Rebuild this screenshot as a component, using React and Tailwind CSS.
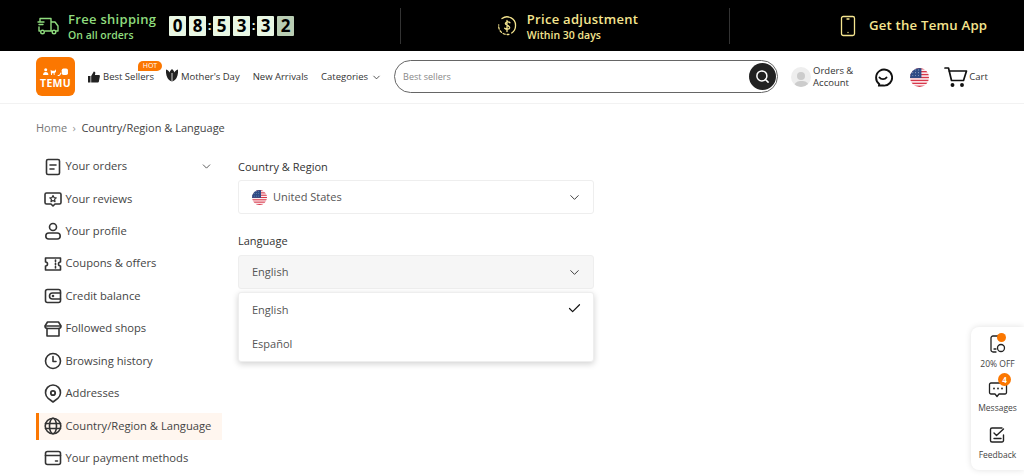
import React from "react";
import { ChevronDown, Check, Search } from "lucide-react";

const font = "font-['Open_Sans','Noto_Sans',sans-serif]";

function Flag({ size = 20 }) {
  const stripes = [];
  for (let i = 0; i < 7; i++) stripes.push(<rect key={i} x="0" y={i * 3.08} width="20" height="1.54" fill="#d8374a" />);
  return (
    <svg width={size} height={size} viewBox="0 0 20 20" className="shrink-0">
      <defs><clipPath id="fc"><circle cx="10" cy="10" r="10" /></clipPath></defs>
      <g clipPath="url(#fc)">
        <rect width="20" height="20" fill="#fff" />
        {stripes}
        <rect width="12" height="10.500" fill="#2f4b85" />
        {[2, 5, 8].map((y) => [3, 6, 9].map((x) => <circle key={x + "-" + y} cx={x} cy={y} r="0.45" fill="#fff" />))}
      </g>
    </svg>
  );
}

const S = ({ children, size = 20, sw = 1.6, cls = "" }) => (
  <svg width={size} height={size} viewBox="0 0 20 20" fill="none" stroke="currentColor" strokeWidth={sw} strokeLinecap="round" strokeLinejoin="round" className={"shrink-0 " + cls}>
    {children}
  </svg>
);

const menu = [
  ["Your orders", <S key="a"><rect x="3.500" y="2.500" width="13" height="15" rx="1.500" /><path d="M7 8h6M7 12h4" /></S>],
  ["Your reviews", <S key="b"><path d="M3.500 4h13a1.500 1.500 0 0 1 1.500 1.500v8a1.500 1.500 0 0 1-1.500 1.500H12l-2 2-2-2H3.500A1.500 1.500 0 0 1 2 13.500v-8A1.500 1.500 0 0 1 3.500 4z" /><path d="M10 6.500l1 2.100 2.200.3-1.600 1.500.4 2.200-2-1.100-2 1.100.4-2.200-1.600-1.500 2.200-.3z" strokeWidth="1.200" /></S>],
  ["Your profile", <S key="c"><circle cx="10" cy="6" r="3.500" /><rect x="2.800" y="12" width="14.400" height="6" rx="3" /></S>],
  ["Coupons & offers", <S key="d"><path d="M2.500 4h15v4a2 2 0 0 0 0 4v4h-15v-4a2 2 0 0 0 0-4z" /><path d="M12.500 6v1.500M12.500 9.300v1.400M12.500 12.500V14" /></S>],
  ["Credit balance", <S key="e"><rect x="2.500" y="3.500" width="15" height="13" rx="2" /><path d="M17.500 7H9.500a3 3 0 0 0 0 6h8" /><circle cx="10" cy="10" r=".5" /></S>],
  ["Followed shops", <S key="f"><path d="M4.500 3h11l2.500 4a2.500 2.500 0 0 1-2.500 2.500h-11A2.500 2.500 0 0 1 2 7z" /><path d="M4 9.500V17h12V9.500M2.500 7h15" /></S>],
  ["Browsing history", <S key="g"><circle cx="10" cy="10" r="7.500" /><path d="M10 5.500V10.500h3" /></S>],
  ["Addresses", <S key="h"><path d="M10 18l-4.800-3.700A7.500 7.500 0 1 1 14.800 14.300z" /><circle cx="10" cy="9" r="2.200" strokeWidth="1.800" /></S>],
  ["Country/Region & Language", <S key="i"><circle cx="10" cy="10" r="7.800" /><ellipse cx="10" cy="10" rx="3.500" ry="7.800" /><path d="M2.500 7.500h15M2.500 12.500h15" /></S>],
  ["Your payment methods", <S key="j"><rect x="2.500" y="3.500" width="15" height="13" rx="2" /><path d="M2.500 7.500h15M12.500 13h2" /></S>],
];

function Digit({ d, dim }) {
  return (
    <span className={`flex h-[20px] w-[17px] items-center justify-center rounded-[1px] text-[17px] font-bold leading-none text-black ${dim ? "bg-[#b9cdb3]" : "bg-[#e9f7e4]"}`}>
      {d}
    </span>
  );
}
const Colon = () => <span className="w-[7px] text-center text-[13px] font-bold leading-none text-[#e9f7e4]">:</span>;

function Logo() {
  return (
    <div className="mt-[-1px] flex h-[39px] w-[39px] shrink-0 flex-col items-center justify-center rounded-[6px] bg-[#fb7701] pt-[3px] text-white">
      <svg width="29" height="8" viewBox="0 0 29 9" fill="#fff">
        <circle cx="3.500" cy="2" r="1.700" />
        <path d="M.500 8c0-2.500 1-3.500 3-3.500s3 1 3 3.500z" />
        <path d="M9 2l1.500 1h3L15 1.500v3l-1.500 1V8h-1V6h-2v2h-1z" />
        <path d="M17 8c2 0 2.500-1 3-3l1 .5C20.500 8 19 9 17 9z" />
        <rect x="21.500" y=".5" width="7" height="7.500" rx="2" />
      </svg>
      <span className={`mt-[2px] text-[10.500px] font-bold leading-none tracking-[0.3px] ${font}`}>TEMU</span>
    </div>
  );
}

export default function App() {
  return (
    <div className={`relative h-[476px] w-[1024px] overflow-hidden bg-white text-[#222] ${font}`}>
      {/* promo bar */}
      <div className="flex h-[51px] items-center bg-black">
        <div className="flex w-[400px] items-center pl-[37px]">
          <svg width="22" height="20" viewBox="0 0 22 20" fill="none" stroke="#8fdc7e" strokeWidth="1.400" strokeLinecap="round" strokeLinejoin="round" className="shrink-0">
            <path d="M3 5V2.500h11V15H8M3 15H2V11M14 6h4l3 4v5h-2M14 15h1M1 6h6M2 8.500h4" />
            <circle cx="5.500" cy="16" r="1.800" />
            <circle cx="17" cy="16" r="1.800" />
          </svg>
          <div className="ml-[9px] flex w-[101px] flex-col">
            <span className="text-[13px] font-semibold leading-[18px] tracking-[0.3px] text-[#8fdc7e] whitespace-nowrap">Free shipping</span>
            <span className="text-[10.500px] font-semibold leading-[14px] text-[#8fdc7e] whitespace-nowrap">On all orders</span>
          </div>
          <div className="flex items-center">
            <div className="flex gap-[3px]"><Digit d="0" /><Digit d="8" /></div>
            <Colon />
            <div className="flex gap-[3px]"><Digit d="5" /><Digit d="3" /></div>
            <Colon />
            <div className="flex gap-[3px]"><Digit d="3" /><Digit d="2" dim /></div>
          </div>
        </div>
        <div className="flex h-[36px] w-[330px] items-center justify-center gap-[9px] border-x border-[#333] pl-[4px]">
          <svg width="22" height="22" viewBox="0 0 22 22" fill="none" stroke="#f5e58f" strokeWidth="1.300" strokeLinecap="round" className="shrink-0">
            <path d="M6 3.500A8.500 8.500 0 0 1 19.500 11c0 3-1.500 5.500-3.800 7" />
            <path d="M13 19.300a8.500 8.500 0 0 1-10.300-9.300" strokeDasharray="2 2" />
            <path d="M14 7.800c-.7-1-3.900-1.400-4.600.4-.7 2.300 4.600 2 4.300 4.700-.5 1.700-3.700 1.700-5 .3M11 5.500v11" />
          </svg>
          <div className="flex flex-col">
            <span className="text-[13px] font-semibold leading-[18px] tracking-[0.28px] text-[#f5e58f]">Price adjustment</span>
            <span className="text-[10.500px] font-semibold leading-[14px] text-[#f5e58f]">Within 30 days</span>
          </div>
        </div>
        <div className="flex items-center pl-[110px]">
          <svg width="16" height="22" viewBox="0 0 16 22" fill="none" stroke="#f5e58f" strokeWidth="1.300" strokeLinecap="round" className="shrink-0">
            <rect x="1.500" y="1.500" width="13" height="19" rx="1.800" />
            <path d="M7 4h2M8 17.500h.01" />
          </svg>
          <span className="ml-[13px] whitespace-nowrap text-[13.200px] font-semibold tracking-[0.2px] text-[#f5e58f]">Get the Temu App</span>
        </div>
      </div>

      {/* main nav */}
      <div className="flex h-[53px] items-center border-b border-[#f2f2f2] pl-[36px]">
        <Logo />
        <div className="ml-[13px] flex items-center text-[9.500px] text-[#333]">
          <div className="relative flex items-center gap-[3px]">
            <svg width="12" height="12" viewBox="0 0 12 12" fill="#222"><path d="M0 5h2.500v6.500H0zM3.200 5L5.800.5c1 0 1.700.7 1.500 1.800L6.900 4h4c.7 0 1.100.6 1 1.300l-1 5.300c-.1.6-.5.900-1.100.9H3.200z" /></svg>
            <span className="whitespace-nowrap">Best Sellers</span>
            <span className="absolute left-[50px] top-[-9px] flex h-[10px] w-[24px] items-center justify-center rounded-[5px] rounded-bl-none bg-[#fb7701] text-[7px] leading-none text-white">HOT</span>
          </div>
          <div className="ml-[12px] flex items-center gap-[3px]">
            <svg width="12" height="13" viewBox="0 0 12 13" fill="#222" className="mt-[-3px]"><path d="M0 .5C2 1 3 2 3.500 3.500 4 2 5 .8 6 0c1 .8 2 2 2.500 3.500C9 2 10 1 12 .5c.3 3-.2 6-1.500 8.500-1 1.800-2.800 3-4.500 3.500C4.300 12 2.500 10.800 1.500 9 .2 6.500-.3 3.500 0 .5z" /><path d="M6 4v8.500" stroke="#fff" strokeWidth=".8" /></svg>
            <span className="whitespace-nowrap">Mother's Day</span>
          </div>
          <span className="ml-[13px] whitespace-nowrap">New Arrivals</span>
          <span className="ml-[13px] whitespace-nowrap">Categories</span>
          <ChevronDown size={11} strokeWidth={1.800} className="ml-[3px]" />
        </div>
        <div className="ml-[12px] mt-[-1px] flex h-[33px] w-[384px] items-center justify-between rounded-full border border-[#666] pl-[8px] pr-[1px]">
          <span className="text-[9px] text-[#888]">Best sellers</span>
          <span className="flex h-[27px] w-[27px] items-center justify-center rounded-full bg-[#222]">
            <Search size={15} strokeWidth={2.400} className="text-white" />
          </span>
        </div>
        <div className="ml-[13px] flex h-[20px] w-[20px] shrink-0 flex-col items-center justify-end overflow-hidden rounded-full bg-[#eee]">
          <span className="h-[8px] w-[8px] rounded-full bg-[#ccc]" />
          <span className="mt-[1px] h-[6px] w-[15px] rounded-t-full bg-[#ccc]" />
        </div>
        <div className="ml-[2px] text-[9.500px] leading-[12px] text-[#333]"><div>Orders &</div><div>Account</div></div>
        <svg width="20" height="21" viewBox="0 0 20 21" fill="none" stroke="#111" strokeWidth="1.900" strokeLinecap="round" className="ml-[20px] shrink-0">
          <path d="M6 18.500l.2-1.600A8 8 0 1 1 10 18.500z" />
          <path d="M6.500 10.500c1.500 2.200 5.500 2.200 7 0" />
        </svg>
        <div className="ml-[17px]"><Flag size={19} /></div>
        <svg width="24" height="22" viewBox="0 0 24 22" fill="none" stroke="#111" strokeWidth="1.700" strokeLinecap="round" strokeLinejoin="round" className="ml-[15px] shrink-0">
          <path d="M1 2h3.500l3 12.500h12L22.500 5H5" />
          <circle cx="8.500" cy="19" r="1.100" fill="#111" />
          <circle cx="18" cy="19" r="1.100" fill="#111" />
        </svg>
        <span className="ml-[1px] text-[9.500px] text-[#333]">Cart</span>
      </div>

      {/* breadcrumb */}
      <div className="mt-[16px] flex h-[16px] items-center pl-[36px] text-[11px] leading-[16px]">
        <span className="text-[#777]">Home</span>
        <span className="mx-[5.500px] text-[#999]">›</span>
        <span className="text-[#444]">Country/Region & Language</span>
      </div>

      <div className="mt-[15px] flex pl-[36px]">
        {/* sidebar */}
        <div className="flex w-[186px] flex-col gap-[5.440px] pt-[2px]">
          {menu.map(([label, icon], i) => {
            const active = i === 8;
            return (
              <div key={label} className={`flex h-[27px] items-center text-[11.200px] font-medium text-[#444] ${active ? "border-l-[3px] border-[#fb7701] bg-[#fff6ef] pl-[4px]" : "pl-[7px]"}`}>
                <span className="flex w-[22.500px] text-[#333]">{icon}</span>
                <span className="whitespace-nowrap">{label}</span>
                {i === 0 && <ChevronDown size={13} strokeWidth={1.600} className="ml-auto mr-[9px] text-[#444]" />}
              </div>
            );
          })}
        </div>

        {/* form */}
        <div className="relative ml-[16px] w-[356px] pt-[8px]">
          <div className="text-[11px] font-medium leading-[16px] text-[#333]">Country & Region</div>
          <div className="mt-[5px] flex h-[34px] items-center rounded-[3px] border border-[#eee] pl-[13px] pr-[11px] pt-[1px] text-[11px] text-[#555]">
            <Flag size={15} />
            <span className="ml-[6px]">United States</span>
            <ChevronDown size={15} strokeWidth={1.500} className="ml-auto text-[#333]" />
          </div>
          <div className="mt-[19px] text-[11px] font-medium leading-[16px] text-[#333]">Language</div>
          <div className="mt-[6px] flex h-[34px] items-center rounded-[3px] border border-[#eee] bg-[#f6f6f6] pl-[13px] pr-[11px] text-[11px] text-[#555]">
            <span>English</span>
            <ChevronDown size={15} strokeWidth={1.500} className="ml-auto text-[#333]" />
          </div>
          <div className="absolute left-0 top-[141px] w-[356px] rounded-[3px] border border-[#eee] bg-white text-[11px] text-[#555] shadow-[0_2px_6px_rgba(0,0,0,0.18)]">
            <div className="flex h-[34px] items-center pl-[13px] pr-[11px]">
              <span>English</span>
              <Check size={15} strokeWidth={1.900} className="ml-auto mt-[-4px] text-[#111]" />
            </div>
            <div className="flex h-[34px] items-center pl-[13px]">Español</div>
          </div>
        </div>
      </div>

      {/* floating side panel */}
      <div className="absolute left-[971px] top-[327px] flex h-[143px] w-[53px] flex-col items-center rounded-l-[8px] bg-white pt-[7px] text-[8.500px] leading-[12px] text-[#444] shadow-[0_0_6px_rgba(0,0,0,0.12)]">
        <div className="relative flex flex-col items-center">
          <svg width="18" height="20" viewBox="0 0 18 20" fill="none" stroke="#222" strokeWidth="1.300" strokeLinecap="round">
            <path d="M7 18H4a2 2 0 0 1-2-2V4a2 2 0 0 1 2-2h6M5 15h2" />
            <circle cx="12" cy="14" r="3.500" />
          </svg>
          <span className="absolute left-[17px] top-[-1px] h-[9px] w-[9px] rounded-full bg-[#fb7701]" />
          <span className="mt-[4px]">20% OFF</span>
        </div>
        <div className="relative mt-[10px] flex flex-col items-center">
          <svg width="20" height="18" viewBox="0 0 20 18" fill="none" stroke="#222" strokeWidth="1.300" strokeLinecap="round" strokeLinejoin="round">
            <path d="M3 3h14a1.500 1.500 0 0 1 1.500 1.500v8A1.500 1.500 0 0 1 17 14h-6l-2 2.500L7 14H3a1.500 1.500 0 0 1-1.500-1.500v-8A1.500 1.500 0 0 1 3 3z" />
            <path d="M6 8.500h.01M10 8.500h.01M14 8.500h.01" strokeWidth="1.800" />
          </svg>
          <span className="absolute left-[20px] top-[-7px] flex h-[13px] w-[13px] items-center justify-center rounded-full bg-[#fb7701] text-[8px] font-bold leading-none text-white">4</span>
          <span className="mt-[4px]">Messages</span>
        </div>
        <div className="mt-[12px] flex flex-col items-center">
          <svg width="18" height="18" viewBox="0 0 18 18" fill="none" stroke="#222" strokeWidth="1.400" strokeLinecap="round" strokeLinejoin="round">
            <path d="M14 2H4a1.500 1.500 0 0 0-1.500 1.500v11A1.500 1.500 0 0 0 4 16h10a1.500 1.500 0 0 0 1.500-1.500V9" />
            <path d="M6 7l2.500 2.500L15.500 3M6 12.500h7" />
          </svg>
          <span className="mt-[5px]">Feedback</span>
        </div>
      </div>
    </div>
  );
}
